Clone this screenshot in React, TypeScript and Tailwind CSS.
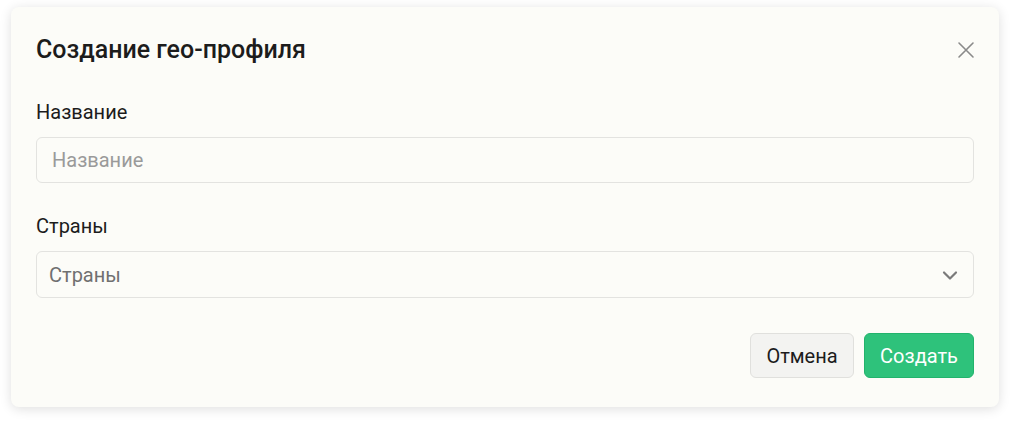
import React from "react";

const App = () => {
  return (
    <div className="w-[1010px] h-[422px] bg-white pt-[7px] pl-[11px] font-['Roboto',sans-serif]">
      <div className="w-[988px] bg-[#fcfcf8] rounded-lg shadow-[0_2px_12px_rgba(0,0,0,0.13)] px-[25px] pt-[28px] pb-[29px]">
        <div className="flex items-center justify-between h-[30px]">
          <h2 className="text-[25px] leading-[30px] font-medium text-[#1c1c1c]">
            Создание гео-профиля
          </h2>
          <button className="w-[20px] h-[20px] flex items-center justify-center text-[#8a8a8a] mr-[-2px]">
            <svg width="18" height="18" viewBox="0 0 18 18" fill="none" stroke="currentColor" strokeWidth="1.6" strokeLinecap="round">
              <path d="M2 2L16 16M16 2L2 16" />
            </svg>
          </button>
        </div>

        <label className="block mt-[35px] text-[20px] leading-[24px] text-[#1c1c1c]">Название</label>
        <input
          placeholder="Название"
          className="mt-[13px] w-full h-[46px] rounded-md border border-[#e3e3e0] bg-[#fcfcf8] px-[15px] text-[20px] text-[#1c1c1c] placeholder:text-[#9a9a9a] outline-none"
        />

        <label className="block mt-[31px] text-[20px] leading-[24px] text-[#1c1c1c]">Страны</label>
        <div className="mt-[13px] w-full h-[47px] rounded-md border border-[#e3e3e0] flex items-center justify-between pl-[12px] pr-[15px]">
          <span className="text-[20px] text-[#707070]">Страны</span>
          <svg width="16" height="16" viewBox="0 0 16 16" fill="none" stroke="#7a7a7a" strokeWidth="2.2" strokeLinecap="round" strokeLinejoin="round">
            <path d="M2 5.5L8 11.5L14 5.5" />
          </svg>
        </div>

        <div className="mt-[35px] flex justify-end gap-[10px]">
          <button className="h-[45px] w-[104px] rounded-md border border-[#e0e0dd] bg-[#f3f3f1] text-[20px] text-[#1c1c1c]">
            Отмена
          </button>
          <button className="h-[45px] w-[110px] rounded-md border border-[#22b36c] bg-[#2ec27b] text-[20px] text-white">
            Создать
          </button>
        </div>
      </div>
    </div>
  );
};

export default App;
